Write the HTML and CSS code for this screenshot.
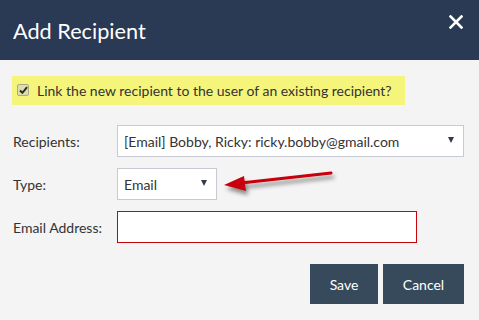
FILE: index.html
```html
<!DOCTYPE html>
<html lang="en">
<head>
    <meta charset="UTF-8">
    <title>Add Recipient</title>
    <link rel="stylesheet" href="styles.css">
</head>
<body>
    <div class="modal">
        <div class="modal-header">
            <h2>Add Recipient</h2>
            <svg class="close" width="14" height="14" viewBox="0 0 14 14">
                <path d="M1.5 1.5 L12.5 12.5 M12.5 1.5 L1.5 12.5" stroke="#fff" stroke-width="2.6" stroke-linecap="square"/>
            </svg>
        </div>
        <div class="modal-body">
            <label class="link-option">
                <span class="checkbox">
                    <svg width="9" height="8" viewBox="0 0 10 9">
                        <path d="M1 5 L3.8 7.6 L9 1.4" fill="none" stroke="#2b2b1a" stroke-width="2.2"/>
                    </svg>
                </span>
                <span>Link the new recipient to the user of an existing recipient?</span>
            </label>

            <div class="form-grid">
                <span class="label">Recipients:</span>
                <div class="select wide">
                    <span>[Email] Bobby, Ricky: ricky.bobby@gmail.com</span>
                    <span class="caret"></span>
                </div>

                <span class="label">Type:</span>
                <div class="select short">
                    <span>Email</span>
                    <span class="caret"></span>
                </div>

                <span class="label">Email Address:</span>
                <div class="text-input"></div>
            </div>

            <div class="actions">
                <button class="btn">Save</button>
                <button class="btn">Cancel</button>
            </div>

            <!-- annotation arrow -->
            <svg class="arrow" width="130" height="34" viewBox="0 0 130 34">
                <defs>
                    <filter id="sh" x="-10%" y="-50%" width="130%" height="250%">
                        <feDropShadow dx="2" dy="4" stdDeviation="2" flood-color="#000" flood-opacity="0.45"/>
                    </filter>
                </defs>
                <g filter="url(#sh)">
                    <line x1="110" y1="4" x2="20" y2="14" stroke="#c8050a" stroke-width="3" stroke-linecap="round"/>
                    <polygon points="3,16 23,7 25,22" fill="#c8050a"/>
                </g>
            </svg>
        </div>
    </div>
</body>
</html>
```

FILE: styles.css
```css
body {
    margin: 0;
    font-family: Lato, "Open Sans", sans-serif;
    background-color: #f4f4f4;
}

.modal {
    width: 479px;
    height: 320px;
    background-color: #f4f4f4;
}

.modal-header {
    height: 60px;
    background-color: #2a3954;
    color: #fff;
    display: flex;
    justify-content: space-between;
    padding: 0 16px 0 13px;
}

.modal-header h2 {
    margin: 0;
    font-size: 21.7px;
    font-weight: normal;
    line-height: 62px;
}

.close {
    margin-top: 15px;
}

.modal-body {
    position: relative;
    padding: 16px 15px 0 12px;
}

.link-option {
    display: inline-flex;
    align-items: center;
    gap: 8px;
    background-color: #f5f57b;
    height: 29px;
    padding: 0 13px 0 5px;
    font-size: 14px;
    color: #333;
    white-space: nowrap;
}

.checkbox {
    box-sizing: border-box;
    width: 12px;
    height: 12px;
    border: 1px solid #a9a98a;
    border-radius: 2px;
    background-color: #deddb0;
    display: flex;
    align-items: center;
    justify-content: center;
    margin-top: -2px;
}

.form-grid {
    display: grid;
    grid-template-columns: 105px auto;
    row-gap: 11px;
    align-items: center;
    margin-top: 20px;
    font-size: 14px;
    color: #333;
}

.label {
    padding-left: 1px;
}

.select, .text-input {
    height: 32px;
    box-sizing: border-box;
    background-color: #fff;
    border: 1px solid #c5cad3;
    display: flex;
    align-items: center;
    justify-content: space-between;
    padding: 0 9px 0 6px;
    color: #333;
}

.select.wide {
    width: 347px;
}

.select.short {
    width: 100px;
}

.caret {
    width: 0;
    height: 0;
    border-left: 3.5px solid transparent;
    border-right: 3.5px solid transparent;
    border-top: 6px solid #333b48;
    margin-top: -2px;
}

.text-input {
    width: 300px;
    border-color: #c8030a;
}

.actions {
    display: flex;
    justify-content: flex-end;
    gap: 5px;
    margin-top: 21px;
}

.btn {
    height: 40px;
    border: none;
    background-color: #364a5c;
    color: #fff;
    font-family: inherit;
    font-size: 14px;
    padding: 0;
}

.btn:first-child {
    width: 68px;
}

.btn:last-child {
    width: 81px;
}

.arrow {
    position: absolute;
    left: 221px;
    top: 109px;
}
```
